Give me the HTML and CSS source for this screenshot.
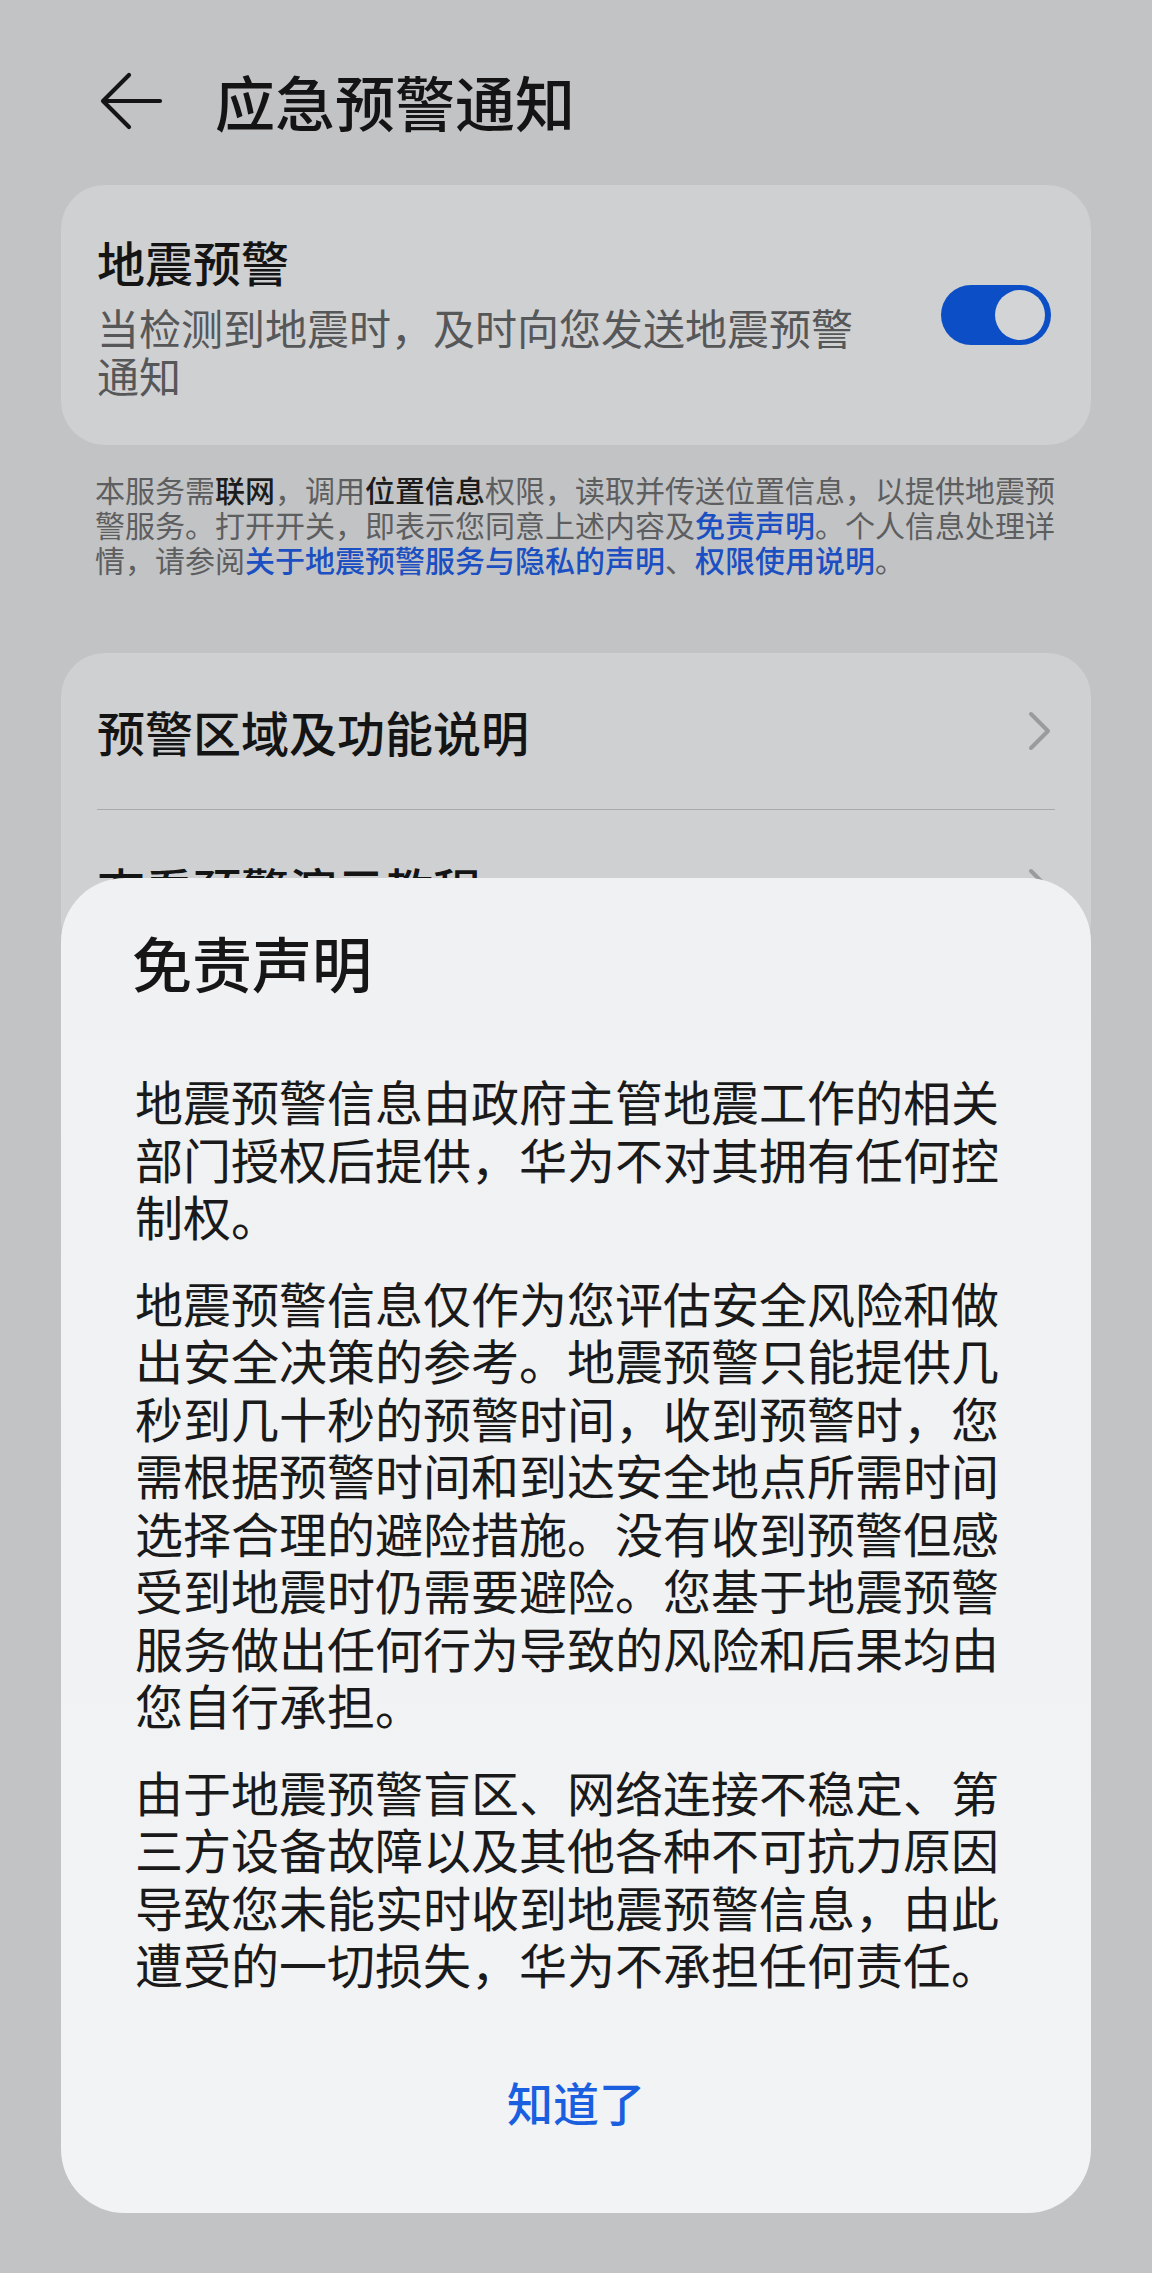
FILE: index.html
```html
<!DOCTYPE html>
<html lang="zh-CN">
<head>
  <meta charset="UTF-8" />
  <meta name="viewport" content="width=device-width, initial-scale=1.0"/>
  <title>应急预警通知</title>
  <link rel="stylesheet" href="styles.css">
</head>
<body>

  <!-- Header -->
  <div class="header">
    <svg class="back" width="64" height="60" viewBox="0 0 64 60">
      <path d="M61 30H5M30 4L4 30L30 56" fill="none" stroke="#141414" stroke-width="4.2" stroke-linecap="round" stroke-linejoin="round"/>
    </svg>
    <h1>应急预警通知</h1>
  </div>

  <!-- Earthquake switch card -->
  <div class="card switch-card">
    <div class="switch-text">
      <div class="switch-title">地震预警</div>
      <div class="switch-desc">当检测到地震时，及时向您发送地震预警通知</div>
    </div>
    <div class="toggle on"></div>
  </div>

  <p class="notice">本服务需<b>联网</b>，调用<b>位置信息</b>权限，读取并传送位置信息，以提供地震预警服务。打开开关，即表示您同意上述内容及<a>免责声明</a>。个人信息处理详情，请参阅<a>关于地震预警服务与隐私的声明</a>、<a>权限使用说明</a>。</p>

  <!-- Menu card -->
  <div class="card menu-card">
    <div class="menu-row">
      <span>预警区域及功能说明</span>
      <svg class="chevron" width="28" height="42" viewBox="0 0 28 42"><path d="M4 4L21 21L4 38" fill="none" stroke="#9a9b9d" stroke-width="4" stroke-linecap="round" stroke-linejoin="round"/></svg>
    </div>
    <div class="menu-row">
      <span>查看预警演示教程</span>
      <svg class="chevron" width="28" height="42" viewBox="0 0 28 42"><path d="M4 4L21 21L4 38" fill="none" stroke="#9a9b9d" stroke-width="4" stroke-linecap="round" stroke-linejoin="round"/></svg>
    </div>
  </div>

  <!-- Disclaimer dialog -->
  <div class="dialog">
    <h2>免责声明</h2>
    <p>地震预警信息由政府主管地震工作的相关部门授权后提供，华为不对其拥有任何控制权。</p>
    <p>地震预警信息仅作为您评估安全风险和做出安全决策的参考。地震预警只能提供几秒到几十秒的预警时间，收到预警时，您需根据预警时间和到达安全地点所需时间选择合理的避险措施。没有收到预警但感受到地震时仍需要避险。您基于地震预警服务做出任何行为导致的风险和后果均由您自行承担。</p>
    <p>由于地震预警盲区、网络连接不稳定、第三方设备故障以及其他各种不可抗力原因导致您未能实时收到地震预警信息，由此遭受的一切损失，华为不承担任何责任。</p>
    <div class="dialog-btn">知道了</div>
  </div>

</body>
</html>
```

FILE: styles.css
```css
/* Page (dimmed behind the dialog) */
body {
  margin: 0;
  padding: 0 61px;
  min-height: 2273px;
  background-color: #c2c3c5;
  color: #141414;
  font-family: "Noto Sans CJK SC", "Noto Sans", sans-serif;
  position: relative;
}

/* Header */
.header {
  display: flex;
  align-items: center;
  height: 82px;
  margin-top: 60px;
  padding-left: 38px;
  gap: 52px;
}

.header h1 {
  margin: 0;
  font-size: 60px;
  font-weight: 500;
  line-height: 82px;
  color: #141414;
}

/* Cards */
.card {
  background-color: #cfd0d2;
  border-radius: 44px;
}

.switch-card {
  margin-top: 43px;
  padding: 46px 40px 46px 36px;
  display: flex;
  align-items: center;
  gap: 70px;
}

.switch-text {
  flex: 1;
}

.switch-title {
  font-size: 48px;
  font-weight: 500;
  line-height: 60px;
  margin-bottom: 12px;
}

.switch-desc {
  font-size: 42px;
  line-height: 48px;
  color: #565759;
}

/* Toggle */
.toggle {
  width: 110px;
  height: 60px;
  border-radius: 30px;
  background-color: #0b4ec6;
  position: relative;
  flex-shrink: 0;
}

.toggle::after {
  content: "";
  position: absolute;
  top: 5px;
  right: 6px;
  width: 50px;
  height: 50px;
  border-radius: 50%;
  background-color: #d3d4d6;
}

/* Notice text */
.notice {
  margin: 27px 0 0;
  padding: 0 34px;
  font-size: 30px;
  line-height: 35px;
  color: #5d5e60;
}

.notice b {
  font-weight: 500;
  color: #1c1c1c;
}

.notice a {
  color: #1b4fc2;
  font-weight: 500;
  text-decoration: none;
}

/* Menu card */
.menu-card {
  margin-top: 76px;
  padding: 0 36px;
}

.menu-row {
  display: flex;
  align-items: center;
  justify-content: space-between;
  height: 156px;
  font-size: 48px;
  font-weight: 500;
  color: #141414;
}

.menu-row + .menu-row {
  border-top: 1px solid #a9aaac;
}

/* Dialog */
.dialog {
  position: absolute;
  top: 878px;
  left: 61px;
  width: 1030px;
  box-sizing: border-box;
  padding: 48px 74px 82px;
  background: linear-gradient(180deg, #f0f1f2 0%, #f2f3f4 100%);
  border-radius: 64px;
}

.dialog h2 {
  margin: 0 0 74px -3px;
  font-size: 60px;
  font-weight: 500;
  line-height: 72px;
  color: #161616;
}

.dialog p {
  margin: 0 0 29px;
  font-size: 48px;
  line-height: 57.5px;
  color: #1a1a1a;
}

.dialog p:last-of-type {
  margin-bottom: 0;
}

.dialog-btn {
  margin-top: 78px;
  text-align: center;
  font-size: 46px;
  font-weight: 500;
  line-height: 60px;
  color: #1a5fe0;
}
```
